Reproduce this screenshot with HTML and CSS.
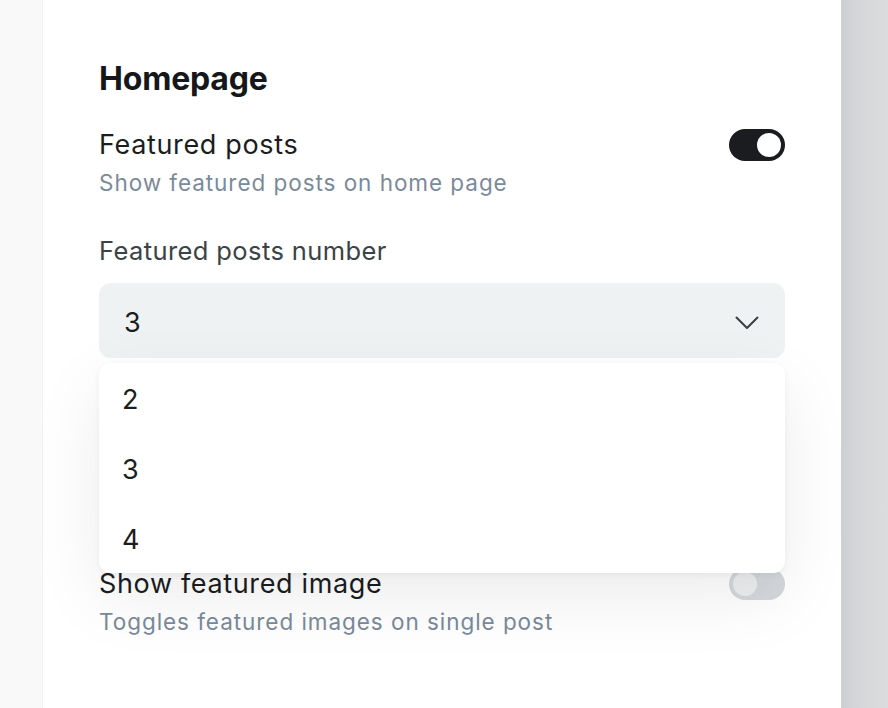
FILE: index.html
```html
<!DOCTYPE html>
<html lang="en">
<head>
<meta charset="utf-8">
<title>Homepage settings</title>
<link rel="stylesheet" href="styles.css">
</head>
<body>
<div class="gutter-left"></div>
<main class="panel">
  <h2 class="heading">Homepage</h2>

  <div class="setting">
    <div class="setting-text">
      <div class="setting-title">Featured posts</div>
      <div class="setting-desc">Show featured posts on home page</div>
    </div>
    <span class="toggle toggle-on"><span class="knob"></span></span>
  </div>

  <div class="field">
    <div class="field-label">Featured posts number</div>
    <div class="select-wrap">
      <div class="select">
        <span class="select-value">3</span>
        <svg class="chevron" width="24" height="14" viewBox="0 0 24 14" fill="none">
          <path d="M1.5 1.5 L12 12 L22.5 1.5" stroke="#3a3f45" stroke-width="2" stroke-linecap="round" stroke-linejoin="round"/>
        </svg>
      </div>
      <ul class="menu">
        <li class="menu-item">2</li>
        <li class="menu-item">3</li>
        <li class="menu-item">4</li>
      </ul>
    </div>
  </div>

  <div class="setting setting-lower">
    <div class="setting-text">
      <div class="setting-title">Show featured image</div>
      <div class="setting-desc">Toggles featured images on single post</div>
    </div>
    <span class="toggle toggle-off"><span class="knob"></span></span>
  </div>
</main>
<div class="gutter-right"></div>
</body>
</html>
```

FILE: styles.css
```css
* { box-sizing: border-box; }

html, body {
  margin: 0;
  padding: 0;
}

body {
  display: flex;
  min-height: 708px;
  height: 708px;
  overflow: hidden;
  background: #f9f9f9;
  font-family: Inter, "Noto Sans", "Liberation Sans", sans-serif;
}

.gutter-left {
  width: 43px;
  flex: none;
  background: #f9f9f9;
  border-right: 1px solid #f1f1f1;
}

.panel {
  width: 798px;
  flex: none;
  background: #ffffff;
  padding: 60px 56px 0 56px;
}

.gutter-right {
  flex: 1;
  background: linear-gradient(90deg, #cdcfd2 0%, #d3d5d8 30%, #d8dadc 70%, #dbdcde 100%);
}

.heading {
  margin: 0;
  font-size: 32px;
  line-height: 38px;
  font-weight: 700;
  color: #16171a;
  letter-spacing: -0.2px;
}

.setting {
  display: flex;
  align-items: flex-start;
  justify-content: space-between;
  margin-top: 30px;
}

.setting-lower {
  margin-top: 209px;
}

.setting-title {
  font-size: 27px;
  line-height: 34px;
  color: #1b1d21;
  letter-spacing: 0.65px;
}

.setting-desc {
  margin-top: 6px;
  font-size: 22.5px;
  line-height: 30px;
  color: #7b8a9b;
  letter-spacing: 0.95px;
}

.toggle {
  position: relative;
  flex: none;
  width: 56px;
  height: 32px;
  border-radius: 16px;
  margin-top: 1px;
}

.toggle-on { background: #1a1c20; }
.toggle-off { background: #d4d8dc; }

.knob {
  position: absolute;
  top: 4px;
  width: 24px;
  height: 24px;
  border-radius: 50%;
  background: #ffffff;
}

.toggle-on .knob { right: 4px; }
.toggle-off .knob { left: 4px; background: #eceef0; }

.field {
  margin-top: 37px;
}

.field-label {
  font-size: 25.5px;
  line-height: 32px;
  color: #3b4248;
  letter-spacing: 0.4px;
}

.select-wrap {
  position: relative;
  margin-top: 16px;
}

.select {
  display: flex;
  align-items: center;
  justify-content: space-between;
  height: 75px;
  padding: 3px 26px 0 25px;
  background: #eff2f3;
  border-radius: 12px;
}

.select-value {
  font-size: 27px;
  color: #1b1d21;
}

.chevron {
  display: block;
  margin-top: 2px;
}

.menu {
  position: absolute;
  top: 80px;
  left: 0;
  right: 0;
  margin: 0;
  padding: 0;
  list-style: none;
  background: #ffffff;
  border-radius: 12px;
  box-shadow: 0 2px 6px rgba(0, 0, 0, 0.05), 0 24px 70px rgba(0, 0, 0, 0.08);
  z-index: 2;
}

.menu-item {
  height: 70px;
  display: flex;
  align-items: center;
  padding: 2px 0 0 23px;
  font-size: 27px;
  color: #1b1d21;
}
```
